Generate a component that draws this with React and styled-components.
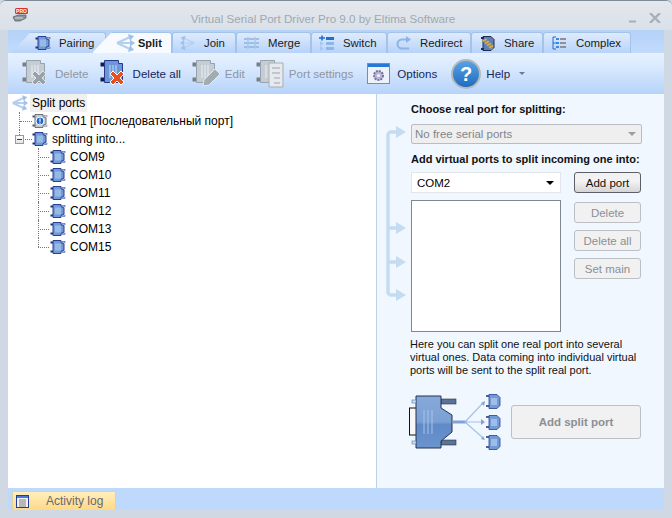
import React from 'react'
import styled, { createGlobalStyle } from 'styled-components'

const GlobalStyle = createGlobalStyle`
  html, body { margin: 0; padding: 0; background: #cfd8e3; }
  * { box-sizing: border-box; }
  body { font-family: "Liberation Sans", Arial, sans-serif; font-size: 11px; color: #000; }
`

const Window = styled.div`
  width: 672px;
  height: 518px;
  display: flex;
  flex-direction: column;
  background: #cfd8e3;
  border-top: 1px solid #7f8b99;
  border-radius: 6px 6px 0 0;
  overflow: hidden;
`

const TitleBar = styled.div`
  height: 29px;
  flex: none;
  display: grid;
  grid-template-columns: 60px 1fr 60px;
  align-items: center;
  padding: 0 12px;
  background: linear-gradient(#e4e8ed, #d9e0e8);
`

const Title = styled.div`
  text-align: center;
  font-size: 11.6px;
  color: #a0a8b1;
  padding: 6px 26px 0 0;
`

const WinButtons = styled.div`
  display: flex;
  justify-content: flex-end;
  align-items: flex-end;
  gap: 13px;
  padding-top: 5px;
  margin-right: -1px;
`

const Body = styled.div`
  flex: 1;
  display: flex;
  flex-direction: column;
  margin: 0 8px 8px;
  min-height: 0;
  background: #bfd9fd;
`

const TabBar = styled.div`
  height: 23px;
  flex: none;
  display: flex;
  align-items: flex-end;
  padding-left: 3px;
  background: linear-gradient(#b4d1f8, #c2dbfc);
`

const Tab = styled.div`
  height: 21px;
  width: ${p => p.$w}px;
  margin-left: ${p => p.$ml || 0}px;
  padding-left: ${p => p.$pl}px;
  flex: none;
  display: flex;
  align-items: center;
  gap: ${p => p.$gap}px;
  position: relative;
  z-index: ${p => (p.$active ? 2 : 1)};
  font-size: ${p => (p.$active ? 11 : 11.4)}px;
  font-weight: ${p => (p.$active ? 700 : 400)};
  color: #1a1a1a;
  border: 1px solid #a4c3ea;
  border-bottom: none;
  border-radius: 3px 3px 0 0;
  background: ${p => (p.$active ? '#f7fbff' : 'linear-gradient(#dfebfd, #b6d3fa)')};
  clip-path: ${p =>
    p.$slant ? 'polygon(20px 0, 100% 0, 100% 100%, 0 100%)' : 'none'};
`

const Toolbar = styled.div`
  height: 41px;
  flex: none;
  display: flex;
  align-items: center;
  padding-left: 14px;
  background: linear-gradient(#e6f1ff, #d9e9fe 35%, #b6d3fa);
`

const ToolItem = styled.div`
  display: flex;
  align-items: center;
  gap: ${p => p.$gap || 5}px;
  margin-right: ${p => p.$mr || 11}px;
  font-size: 11.6px;
  color: ${p => (p.$disabled ? '#8f969f' : '#17255e')};
`

const Caret = styled.span`
  width: 0;
  height: 0;
  margin-left: 4px;
  border-left: 3px solid transparent;
  border-right: 3px solid transparent;
  border-top: 3px solid #5f7ba6;
`

const Main = styled.div`
  height: 394px;
  flex: none;
  display: grid;
  grid-template-columns: 369px 1fr;
`

const TreePane = styled.div`
  background: #fff;
  border-right: 1px solid #bcd0e6;
`

const TreeRow = styled.div`
  height: 18px;
  display: flex;
  align-items: center;
  gap: 2px;
  position: relative;
  padding-left: ${p => (p.$level === 0 ? 3 : p.$level === 1 ? 24 : 42)}px;

  ${p => p.$level > 0 && `
    &::before {
      content: '';
      position: absolute;
      left: ${p.$level === 1 ? 12 : 30}px;
      top: 9px;
      width: ${p.$level === 1 ? 12 : 11}px;
      border-top: 1px dotted #777;
    }
    &::after {
      content: '';
      position: absolute;
      left: ${p.$level === 1 ? 11 : 30}px;
      top: 0;
      height: ${p.$last ? 9 : 18}px;
      border-left: 1px dotted #777;
    }
  `}
`

const RowLabel = styled.span`
  font-size: 12px;
  line-height: 18px;
  padding: 0 2px;
  background: ${p => (p.$selected ? '#f0f0f0' : 'transparent')};
`

const Expander = styled.span`
  position: absolute;
  left: 7px;
  top: 5px;
  width: 9px;
  height: 9px;
  z-index: 1;
  background: linear-gradient(#fff, #e4e4e4);
  border: 1px solid #8f9ba8;
  &::before {
    content: '';
    position: absolute;
    left: 1px;
    top: 3px;
    width: 5px;
    height: 1px;
    background: #2b3f6c;
  }
`

const SidePane = styled.div`
  background: #f0f7ff;
  display: grid;
  grid-template-columns: 33px 231px;
  align-content: start;
  padding: 7px 0 0 1px;
`

const Rail = styled.svg`
  margin-top: 25px;
  display: block;
`

const Form = styled.div`
  display: flex;
  flex-direction: column;
`

const Heading = styled.div`
  font-size: 11px;
  font-weight: 700;
  line-height: 16px;
  color: #111;
  white-space: nowrap;
  margin-top: ${p => p.$mt || 0}px;
`

const Select = styled.div`
  display: flex;
  align-items: center;
  justify-content: space-between;
  height: ${p => (p.$disabled ? 20 : 21)}px;
  padding: 0 ${p => (p.$disabled ? 5 : 6)}px 0 ${p => (p.$disabled ? 3 : 5)}px;
  font-size: 11.5px;
  margin-top: ${p => p.$mt || 0}px;
  color: ${p => (p.$disabled ? '#7f868d' : '#000')};
  background: ${p => (p.$disabled ? '#efefef' : '#fff')};
  border: 1px solid ${p => (p.$disabled ? '#b9bdc2' : '#e2e6ea')};
  border-radius: ${p => (p.$disabled ? 2 : 0)}px;
`

const SelectArrow = styled.span`
  width: 0;
  height: 0;
  border-left: 4px solid transparent;
  border-right: 4px solid transparent;
  border-top: 4px solid ${p => (p.$disabled ? '#9a9ea3' : '#000')};
`

const PortGrid = styled.div`
  display: grid;
  grid-template-columns: 150px 67px;
  column-gap: 13px;
  margin-top: 5px;
`

const ListBox = styled.div`
  height: 132px;
  margin-top: 7px;
  background: #fff;
  border: 1px solid #7f8790;
`

const ButtonColumn = styled.div`
  display: flex;
  flex-direction: column;
  gap: 7px;
  & > button:first-child { margin-bottom: 2px; }
`

const Button = styled.button`
  height: ${p => p.$h || 21}px;
  width: 100%;
  padding: 0;
  font-family: inherit;
  font-size: ${p => p.$fs || 11.5}px;
  font-weight: ${p => p.$weight || 400};
  color: ${p => (p.$disabled ? '#8b9095' : '#111')};
  background: ${p => (p.$disabled ? '#f1f1f1' : 'linear-gradient(#f2f2f2 45%, #d5d5d5)')};
  border: 1px solid ${p => (p.$disabled ? '#bcbfc3' : '#5c6066')};
  border-radius: 3px;
`

const Description = styled.p`
  grid-column: 2;
  margin: 6px 0 0 -1px;
  font-size: 11px;
  line-height: 13px;
  color: #111;
  width: 232px;
`

const Footer = styled.div`
  grid-column: 1 / -1;
  display: grid;
  grid-template-columns: 133px 130px;
  align-items: center;
  margin-top: 16px;
`

const Illustration = styled.svg`
  display: block;
  margin-left: 31px;
`

const StatusBar = styled.div`
  flex: 1;
  display: flex;
  align-items: flex-end;
  padding-left: 4px;
`

const LogTab = styled.div`
  width: 104px;
  height: 19px;
  display: flex;
  align-items: center;
  gap: 17px;
  padding-left: 3px;
  font-size: 12px;
  color: #68696f;
  background: linear-gradient(#ffefbc, #ffd987);
  border: 1px solid #d9d3a6;
  border-bottom: none;
`

const palette = {
  blue: { body: '#6f9bd8', light: '#c4d8f2', line: '#2b3f93', prong: '#1f2c6d' },
  grey: { body: '#c0c8d1', light: '#e9edf1', line: '#6d747c', prong: '#50565d' },
}

// small DB-9 plug, used all over the tree and the tabs
const Port = ({ size = 16, tone = 'blue', badge }) => {
  const c = palette[tone]
  return (
    <svg width={size} height={size} viewBox="0 0 16 16">
      <rect x="0.5" y="2.5" width="3.5" height="2" fill={c.prong} />
      <rect x="0.5" y="11.5" width="3.5" height="2" fill={c.prong} />
      <path d="M3 1.5h8v2l3 1.5v6l-3 1.5v2H3z" fill={c.body} stroke={c.line} />
      <rect x="12" y="2.5" width="3" height="1.5" fill={c.light} stroke={c.line} strokeWidth="0.5" />
      <rect x="12" y="12" width="3" height="1.5" fill={c.light} stroke={c.line} strokeWidth="0.5" />
      {badge ? (
        <g>
          <circle cx="8" cy="8" r="4" fill="#1b66c9" stroke="#fff" />
          <path d="M8 5.5v3.2M8 9.6v1.2" stroke="#fff" strokeWidth="1.2" />
        </g>
      ) : (
        <path d="M6 4.5v7M8 4.5v7M10 4.5v7" stroke={c.light} strokeWidth="1" />
      )}
    </svg>
  )
}

const Fan = ({ flip, w = 20, h = 18, weight = 2 }) => (
  <svg width={w} height={h} viewBox="0 0 20 18" style={flip ? { transform: 'scaleX(-1)' } : undefined}>
    <path d="M2 9L15 3M2 9L15 15M2 9h14" stroke="#b4cff0" strokeWidth={weight} fill="none" />
    <path d="M13 0l6 2-4 5zM15 11l4 5-6 2zM15 5.5L20 9l-5 3.5z" fill="#9fc1ea" />
  </svg>
)

const MergeIcon = () => (
  <svg width="17" height="16" viewBox="0 0 17 16">
    <path d="M1 4h15M1 8h15M1 12h15" stroke="#8eb3de" strokeWidth="1.6" />
    <path d="M5 2v12M12 2v12" stroke="#a9c6e8" strokeWidth="1.4" />
  </svg>
)

const SwitchIcon = () => (
  <svg width="15" height="16" viewBox="0 0 15 16">
    <path d="M0 3h6M3 0.5v5" stroke="#1f6fd0" strokeWidth="1.6" />
    <path d="M7 2h8v3H7z" fill="#1f6fd0" />
    <path d="M7 7h8v3H7zM7 12h8v3H7z" fill="#8fb6e6" />
    <path d="M1 6l4 2.5L1 11zM1 11l4 2.5L1 16z" fill="#a9c8ee" />
  </svg>
)

const RedirectIcon = () => (
  <svg width="15" height="16" viewBox="0 0 15 16">
    <path d="M13 13.5H6a4 4 0 0 1 0-9h5" stroke="#8fb4e2" strokeWidth="2" fill="none" />
    <path d="M10 1l5 3.5L10 8z" fill="#8fb4e2" />
  </svg>
)

const ShareIcon = () => (
  <svg width="16" height="17" viewBox="0 0 16 17">
    <path d="M3 1.5h8l3 3v8l-3 3H3z" fill="#5f7fb4" stroke="#1f2c55" />
    <path d="M1 2h3v2H1zM1 13h3v2H1z" fill="#1f2c55" />
    <path d="M3 5l9 9M5 4l8 8" stroke="#d8ab3d" strokeWidth="2.4" strokeDasharray="2 1" />
  </svg>
)

const ComplexIcon = () => (
  <svg width="14" height="14" viewBox="0 0 14 14">
    <path d="M1 1v12M1 1h3M1 7h3M1 13h3" stroke="#1f6fd0" fill="none" />
    <path d="M4 2h3v2H4zM4 6h3v2H4zM4 10h3v2H4z" fill="#3c86dc" />
    <path d="M8 2h6v2H8zM8 6h6v2H8zM8 10h6v2H8z" fill="#8e9298" />
  </svg>
)

const ToolPort = ({ tone, mark }) => {
  const blue = tone === 'blue'
  return (
    <svg width="28" height="29" viewBox="0 0 28 29">
      <rect x="0.5" y="3.5" width="6" height="4" fill={blue ? '#121c4f' : '#767e86'} />
      <rect x="0.5" y="18.5" width="6" height="4" fill={blue ? '#121c4f' : '#767e86'} />
      <path
        d="M4.5 1.5h14v3h4v16h-4v3h-14z"
        fill={blue ? '#6b97d8' : '#c4ccd4'}
        stroke={blue ? '#26378c' : '#99a1aa'}
      />
      <path d="M10 6v13M13 6v13M16 6v13" stroke={blue ? '#b9d0f0' : '#e6ebef'} strokeWidth="1.2" />
      {mark === 'x' && (
        <path d="M10 15l3-3 4 4 4-4 3 3-4 4 4 4-3 3-4-4-4 4-3-3 4-4z" fill="#98a0a8" stroke="#eef2f6" strokeWidth="0.8" />
      )}
      {mark === 'red' && (
        <path d="M10 15l3-3 4 4 4-4 3 3-4 4 4 4-3 3-4-4-4 4-3-3 4-4z" fill="#e8501b" stroke="#fff" strokeWidth="1" />
      )}
      {mark === 'pen' && <path d="M11 27l1-6 11-11 5 5-11 11z" fill="#a2aab2" stroke="#eef2f6" strokeWidth="0.8" />}
      {mark === 'list' && (
        <g>
          <path d="M13 4h14v24H13z" fill="#e6eaee" stroke="#a6adb5" />
          <path d="M16 9h8M16 14h8M18 19h6M18 24h6" stroke="#9ba3ab" />
        </g>
      )}
    </svg>
  )
}

const OptionsIcon = () => (
  <svg width="23" height="21" viewBox="0 0 23 21">
    <rect x="0.5" y="0.5" width="22" height="20" fill="#eef3fb" stroke="#5b93d8" />
    <rect x="1" y="1" width="21" height="3" fill="#2a78d6" />
    <circle cx="11.5" cy="12.5" r="4.5" fill="#b9b6d9" stroke="#77749f" strokeWidth="2" strokeDasharray="2 1" />
    <circle cx="11.5" cy="12.5" r="1.5" fill="#f3f3fa" />
  </svg>
)

const HelpIcon = () => (
  <svg width="30" height="30" viewBox="0 0 30 30">
    <defs>
      <linearGradient id="helpFill" x1="0" y1="0" x2="0" y2="1">
        <stop offset="0" stopColor="#5aa5e6" />
        <stop offset="1" stopColor="#1e69bd" />
      </linearGradient>
    </defs>
    <circle cx="15" cy="15" r="14" fill="url(#helpFill)" stroke="#b5b8ba" strokeWidth="2" />
    <text x="15" y="22" textAnchor="middle" fontFamily="Liberation Sans" fontWeight="700" fontSize="20" fill="#fff">?</text>
  </svg>
)

const AppIcon = () => (
  <svg width="16" height="15" viewBox="0 0 16 15">
    <rect x="3" y="0" width="13" height="6" rx="1.5" fill="#d9312b" />
    <text x="9.5" y="5" textAnchor="middle" fontFamily="Liberation Sans" fontWeight="700" fontSize="5" fill="#fff">PRO</text>
    <path d="M1 9l5-2h8v3l-6 3H3z" fill="#8d949b" stroke="#4f565d" strokeWidth="0.7" />
    <path d="M3 10h8" stroke="#d6dade" />
  </svg>
)

const LogIcon = () => (
  <svg width="13" height="13" viewBox="0 0 13 13">
    <rect x="0.5" y="0.5" width="12" height="12" fill="#f2f2f2" stroke="#1f3d9a" />
    <rect x="1" y="1" width="11" height="2" fill="#4a78d8" />
    <path d="M3 5h7M3 7h7M3 9h7M3 11h7" stroke="#7d7d7d" />
  </svg>
)

const ArrowRail = () => (
  <Rail width="33" height="176" viewBox="0 0 33 176">
    <path
      d="M19 6h-6a3 3 0 0 0-3 3v157a3 3 0 0 0 3 3h6M10 102h9M10 136h9"
      stroke="#c3dcf2"
      strokeWidth="3.4"
      fill="none"
    />
    <path d="M18 0l10 6-10 6zM18 96l10 6-10 6zM18 130l10 6-10 6zM18 163l10 6-10 6z" fill="#c3dcf2" />
  </Rail>
)

const miniPorts = [1, 22, 42]

const BigPlug = () => (
  <Illustration width="94" height="58" viewBox="0 0 94 58">
    <defs>
      <linearGradient id="plugFill" x1="0" y1="0" x2="0" y2="1">
        <stop offset="0" stopColor="#86a9da" />
        <stop offset="0.5" stopColor="#7ba0d5" />
        <stop offset="0.55" stopColor="#5f8ac8" />
        <stop offset="1" stopColor="#6c94cd" />
      </linearGradient>
    </defs>
    <rect x="32" y="6" width="15" height="5" fill="#5a7397" stroke="#2b3541" strokeWidth="0.6" />
    <rect x="32" y="47" width="15" height="5" fill="#5a7397" stroke="#2b3541" strokeWidth="0.6" />
    <rect x="0.5" y="15" width="7" height="27" fill="#f7f7f7" stroke="#111" />
    <path d="M7 3h25v12l11 7v17l-11 9v7H7z" fill="url(#plugFill)" stroke="#22334f" />
    <path d="M15 17v24M19 17v24M23 17v24" stroke="#a9c3e6" />
    <rect x="3" y="7" width="4" height="3" fill="#cfe0f4" stroke="#4f78ad" strokeWidth="0.6" />
    <rect x="3" y="48" width="4" height="3" fill="#cfe0f4" stroke="#4f78ad" strokeWidth="0.6" />
    <path d="M44 29h14" stroke="#7fa3d6" strokeWidth="3" />
    <path d="M56 29L73 11M56 29h18M56 29l17 15" stroke="#a5c2e6" strokeWidth="1.2" fill="none" />
    <path d="M72 10l4-2-1 5zM72 26l4 3-4 3zM72 46l4 1-2-4z" fill="#7fa3d6" />
    {miniPorts.map(y => (
      <g key={y} transform={`translate(77 ${y})`}>
        <path d="M0 2h3M0 12h3" stroke="#1f2c6d" strokeWidth="1.6" />
        <path d="M3 0.5h8l3 3v8l-3 3H3z" fill="#6f9bd8" stroke="#2b3f93" strokeWidth="0.8" />
        <path d="M6 4v7M8 4v7M10 4v7" stroke="#d2e0f3" />
      </g>
    ))}
  </Illustration>
)

const tabs = [
  { name: 'Pairing', w: 95, pl: 23, gap: 8, slant: true, icon: <Port size={16} /> },
  { name: 'Split', w: 80, ml: -14, pl: 22, gap: 3, slant: true, active: true, icon: <Fan /> },
  { name: 'Join', w: 64, pl: 7, gap: 8, icon: <Fan flip w={16} h={16} weight={1.5} /> },
  { name: 'Merge', w: 75, pl: 6, gap: 8, icon: <MergeIcon /> },
  { name: 'Switch', w: 76, pl: 7, gap: 9, icon: <SwitchIcon /> },
  { name: 'Redirect', w: 84, pl: 8, gap: 9, icon: <RedirectIcon /> },
  { name: 'Share', w: 72, pl: 8, gap: 8, icon: <ShareIcon /> },
  { name: 'Complex', w: 88, pl: 8, gap: 10, icon: <ComplexIcon /> },
]

const comPorts = ['COM9', 'COM10', 'COM11', 'COM12', 'COM13', 'COM15']

export default function App() {
  return (
    <Window>
      <GlobalStyle />
      <TitleBar>
        <AppIcon />
        <Title>Virtual Serial Port Driver Pro 9.0 by Eltima Software</Title>
        <WinButtons>
          <svg width="7" height="3" viewBox="0 0 7 3"><path d="M0 1.5h7" stroke="#a6b0bb" strokeWidth="2" /></svg>
          <svg width="12" height="10" viewBox="0 0 12 10"><path d="M1 0l10 10M11 0L1 10" stroke="#a6b0bb" strokeWidth="2.4" /></svg>
        </WinButtons>
      </TitleBar>
      <Body>
        <TabBar>
          {tabs.map(t => (
            <Tab key={t.name} $w={t.w} $ml={t.ml} $pl={t.pl} $gap={t.gap} $slant={t.slant} $active={t.active}>
              {t.icon}
              <span>{t.name}</span>
            </Tab>
          ))}
        </TabBar>
        <Toolbar>
          <ToolItem $disabled><ToolPort tone="grey" mark="x" />Delete</ToolItem>
          <ToolItem><ToolPort tone="blue" mark="red" />Delete all</ToolItem>
          <ToolItem $disabled><ToolPort tone="grey" mark="pen" />Edit</ToolItem>
          <ToolItem $disabled $mr={14}><ToolPort tone="grey" mark="list" />Port settings</ToolItem>
          <ToolItem $gap={7} $mr={14}><OptionsIcon />Options</ToolItem>
          <ToolItem>
            <HelpIcon />Help<Caret />
          </ToolItem>
        </Toolbar>
        <Main>
          <TreePane>
            <TreeRow $level={0}><Fan w={17} h={16} weight={2.4} /><RowLabel $selected>Split ports</RowLabel></TreeRow>
            <TreeRow $level={1}><Port tone="grey" badge /><RowLabel>COM1 [Последовательный порт]</RowLabel></TreeRow>
            <TreeRow $level={1} $last>
              <Expander />
              <Port />
              <RowLabel>splitting into...</RowLabel>
            </TreeRow>
            {comPorts.map((c, i) => (
              <TreeRow key={c} $level={2} $last={i === comPorts.length - 1}>
                <Port />
                <RowLabel>{c}</RowLabel>
              </TreeRow>
            ))}
          </TreePane>
          <SidePane>
            <ArrowRail />
            <Form>
              <Heading>Choose real port for splitting:</Heading>
              <Select $disabled $mt={7}>No free serial ports<SelectArrow $disabled /></Select>
              <Heading $mt={7}>Add virtual ports to split incoming one into:</Heading>
              <PortGrid>
                <div>
                  <Select>COM2<SelectArrow /></Select>
                  <ListBox />
                </div>
                <ButtonColumn>
                  <Button>Add port</Button>
                  <Button $disabled>Delete</Button>
                  <Button $disabled>Delete all</Button>
                  <Button $disabled>Set main</Button>
                </ButtonColumn>
              </PortGrid>
            </Form>
            <Description>
              Here you can split one real port into several virtual ones. Data coming into individual virtual ports will be sent to the split real port.
            </Description>
            <Footer>
              <BigPlug />
              <Button $disabled $h={34} $weight={700}>Add split port</Button>
            </Footer>
          </SidePane>
        </Main>
        <StatusBar>
          <LogTab><LogIcon />Activity log</LogTab>
        </StatusBar>
      </Body>
    </Window>
  )
}
